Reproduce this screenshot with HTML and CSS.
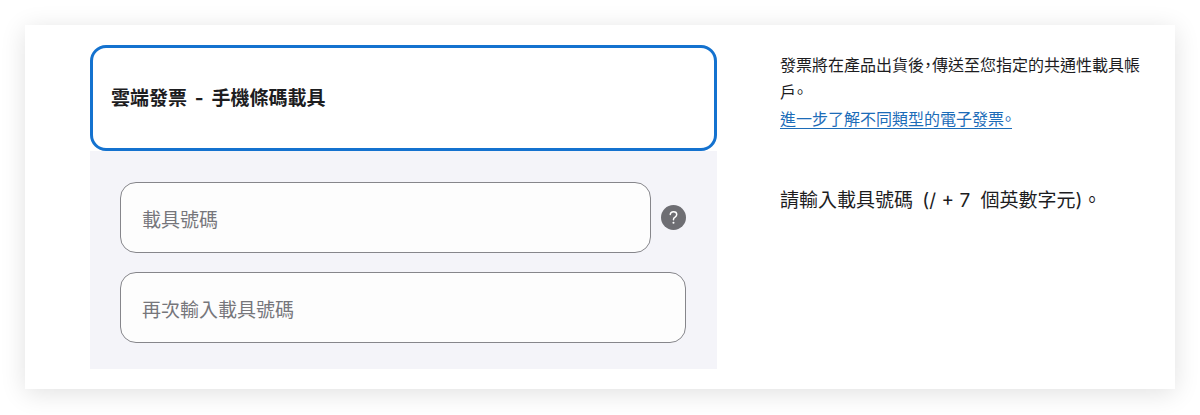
FILE: index.html
```html
<!DOCTYPE html>
<html lang="zh-Hant">
<head>
<meta charset="utf-8">
<title>雲端發票</title>
<link rel="stylesheet" href="styles.css">
</head>
<body>
<main class="card">
  <form class="invoice">
    <button type="button" class="option">雲端發票 <span class="dash">-</span> 手機條碼載具</button>
    <div class="fields">
      <div class="field-row">
        <input class="field" type="text" placeholder="載具號碼" aria-label="載具號碼">
        <button type="button" class="help" aria-label="說明">
          <svg class="help-icon" viewBox="0 0 24 24" aria-hidden="true"><circle cx="12" cy="12" r="12" fill="#6e6e73"/><path d="M8.9 9.2C9 7.4 10.2 6.4 12 6.4c1.8 0 3.1 1 3.1 2.6 0 1.2-.6 1.9-1.6 2.6-1.1.7-1.5 1.2-1.5 2.1v.4" fill="none" stroke="#fff" stroke-width="1.4" stroke-linecap="round" stroke-linejoin="round"/><circle cx="12" cy="17" r="1" fill="#fff"/></svg>
        </button>
      </div>
      <input class="field" type="text" placeholder="再次輸入載具號碼" aria-label="再次輸入載具號碼">
    </div>
  </form>
  <aside class="notes">
    <p class="note">發票將在產品出貨後，傳送至您指定的共通性載具帳戶。</p>
    <a class="link" href="#">進一步了解不同類型的電子發票。</a>
    <p class="hint">請輸入載具號碼 <span class="format">(/ + 7</span> 個英數字元)。</p>
  </aside>
</main>
</body>
</html>
```
FILE: styles.css
```css
* { box-sizing: border-box; }
body {
  margin: 0;
  padding: 25px;
  background: #fff;
  color: #1d1d1f;
  font-family: Inter, "Noto Sans CJK TC", sans-serif;
}
.card {
  display: grid;
  grid-template-columns: 627fr 366fr;
  column-gap: 63px;
  padding: 20px 29px 20px 65px;
  background: #fff;
  box-shadow: 0 4px 24px rgba(0, 0, 0, 0.12);
}
.option {
  display: block;
  width: 100%;
  padding: 38px 18px 36px;
  border: 3px solid #1472cf;
  border-radius: 16px;
  background: #fff;
  color: inherit;
  font: 600 19px/26px Inter, "Noto Sans CJK TC", sans-serif;
  text-align: left;
}
.dash { padding: 0 3px; font-weight: 700; }
.fields {
  display: flex;
  flex-direction: column;
  gap: 19px;
  padding: 31px 31px 26px 30px;
  background: #f4f4f9;
}
.field-row { display: flex; align-items: center; gap: 10px; }
.field {
  width: 100%;
  min-width: 0;
  height: 71px;
  padding: 6px 21px 0;
  border: 1px solid #86868b;
  border-radius: 16px;
  background: #fdfdfd;
  color: inherit;
  font: 400 19px/28px Inter, "Noto Sans CJK TC", sans-serif;
}
.field::placeholder { color: #76767b; opacity: 1; }
.help {
  flex: none;
  padding: 0;
  border: 0;
  background: none;
}
.help-icon { display: block; width: 25px; height: 25px; }
.notes {
  padding-top: 7px;
  font-size: 16px;
  line-height: 27px;
}
.note, .link { font-feature-settings: "halt"; }
.note, .hint { margin: 0; }
.link { color: #1c6cb8; text-underline-offset: 3px; }
.hint { margin-top: 53px; font-size: 19px; line-height: 30px; }
.format { padding: 0 5px 0 4px; }
```
